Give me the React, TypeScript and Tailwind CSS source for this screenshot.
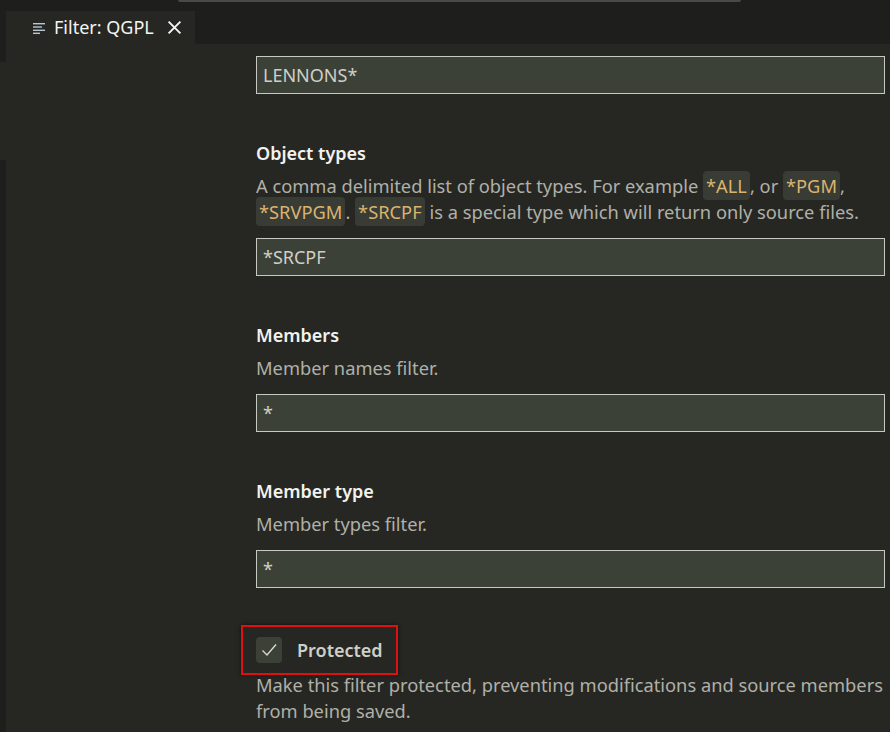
import React from "react";

const font = { fontFamily: '"Noto Sans", "Open Sans", sans-serif' };

const Chip = ({ children }: { children: React.ReactNode }) => (
  <span className="rounded-[4px] bg-[#393b35] px-[3px] py-[2px] text-[#d9b46f]">{children}</span>
);

const Field = ({ value }: { value: string }) => (
  <div className="flex h-[38px] items-center border border-[#c8c8c2] bg-[#3c4137] px-[6px] text-[18px] text-[#cfcfc8]">
    {value}
  </div>
);

const Section = ({
  title,
  children,
  value,
}: {
  title: string;
  children: React.ReactNode;
  value: string;
}) => (
  <div className="mt-[46px]">
    <h3 className="text-[18px] leading-[26px] font-semibold text-[#f2f2ee]">{title}</h3>
    <p className="mt-[7px] text-[18.3px] leading-[26px] text-[#b0b0a8]">{children}</p>
    <div className="mt-[13px]">
      <Field value={value} />
    </div>
  </div>
);

const App = () => {
  return (
    <div style={font} className="flex h-[732px] w-[890px] flex-col overflow-hidden bg-[#262723]">
      {/* tab bar */}
      <div className="relative flex h-[44px] shrink-0 items-end bg-[#1e1f1c]">
        <div className="absolute top-0 left-[178px] h-[2px] w-[563px] rounded-b-[2px] bg-[#4a4b48]" />
        <div className="ml-[6px] flex h-[33px] w-[189px] items-center bg-[#262723] pl-[26px] text-[18px] text-[#f4f4f4]">
          <svg width="14" height="12" viewBox="0 0 14 12" className="mr-[8px]">
            <rect x="1" y="1" width="12" height="1.4" fill="#b9c7d3" />
            <rect x="1" y="4.3" width="9" height="1.4" fill="#b9c7d3" />
            <rect x="1" y="7.6" width="12" height="1.4" fill="#b9c7d3" />
            <rect x="1" y="10.6" width="7" height="1.4" fill="#b9c7d3" />
          </svg>
          <span>Filter: QGPL</span>
          <svg width="15" height="15" viewBox="0 0 14 14" className="ml-[13px]">
            <path d="M1.5 1.5 L12.5 12.5 M12.5 1.5 L1.5 12.5" stroke="#f4f4f4" strokeWidth="1.8" />
          </svg>
        </div>
      </div>

      <div className="flex flex-1">
        <div className="flex w-[6px] flex-col">
          <div className="h-[18px] bg-[#1e1f1c]" />
          <div className="h-[98px]" />
          <div className="flex-1 bg-[#1e1f1c]" />
        </div>
        <div className="w-[250px]" />
        <div className="flex-1 pr-[5px]">
          <div className="mt-[12px]">
            <Field value="LENNONS*" />
          </div>

          <Section title="Object types" value="*SRCPF">
            A comma delimited list of object types. For example <Chip>*ALL</Chip>, or <Chip>*PGM</Chip>,{" "}
            <Chip>*SRVPGM</Chip>. <Chip>*SRCPF</Chip> is a special type which will return only source files.
          </Section>

          <Section title="Members" value="*">
            Member names filter.
          </Section>

          <Section title="Member type" value="*">
            Member types filter.
          </Section>

          <div className="mt-[37px] ml-[-15px] flex h-[50px] w-[157px] items-center border-2 border-[#e01010] pl-[13px] shadow-[0_0_4px_rgba(0,0,0,0.6)]">
            <div className="flex h-[26px] w-[26px] items-center justify-center rounded-[4px] bg-[#3c4137]">
              <svg width="18" height="18" viewBox="0 0 18 18">
                <path d="M2.5 9.5 L7 14 L16 3.5" fill="none" stroke="#d8d8d2" strokeWidth="1.4" />
              </svg>
            </div>
            <span className="ml-[15px] text-[18px] font-semibold text-[#cfcfc8]">Protected</span>
          </div>
          <p className="mt-[-3px] text-[18.3px] leading-[26px] text-[#b0b0a8]">
            Make this filter protected, preventing modifications and source members from being saved.
          </p>
        </div>
      </div>
    </div>
  );
};

export default App;
